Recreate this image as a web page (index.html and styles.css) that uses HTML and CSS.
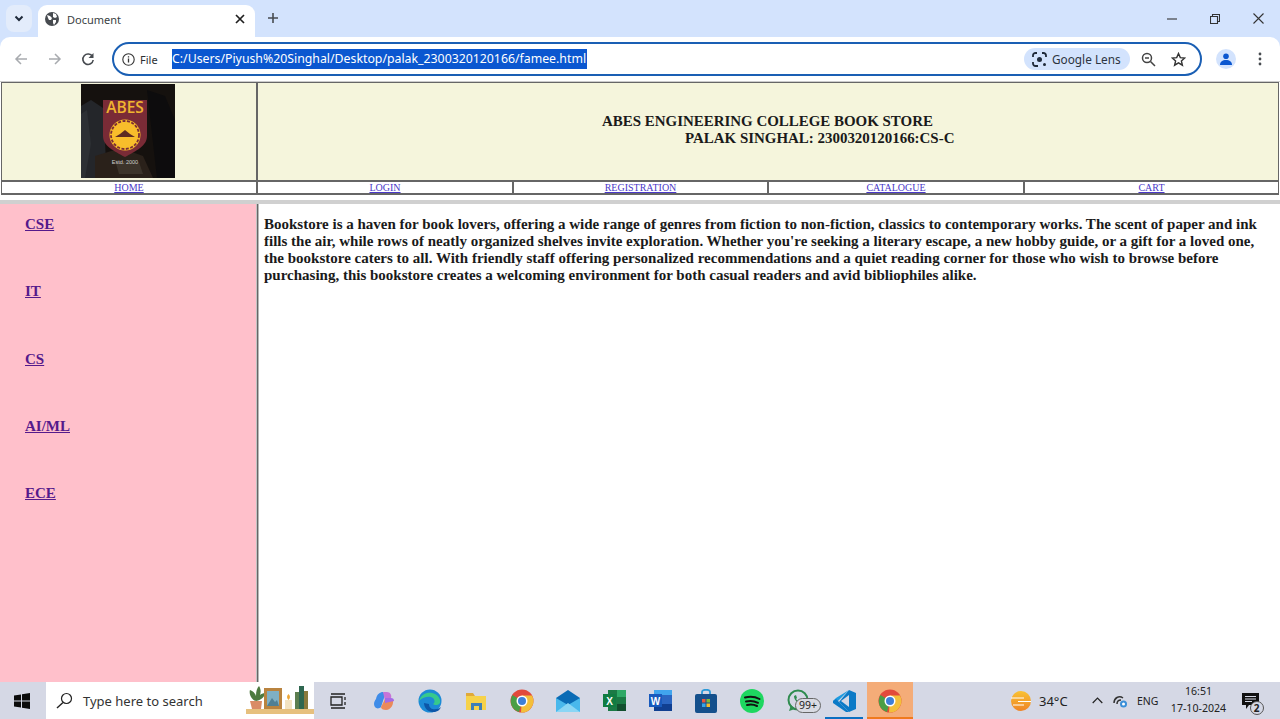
FILE: index.html
```html
<!DOCTYPE html>
<html lang="en">
<head>
<meta charset="utf-8">
<title>Document</title>
<link rel="stylesheet" href="styles.css">
</head>
<body>
<div class="screen">
  <div class="tabstrip">
    <div class="tablist"><svg width="10" height="7" viewBox="0 0 10 7"><path d="M1.5 1.5 5 5l3.5-3.5" fill="none" stroke="#1f2a3a" stroke-width="2"/></svg></div>
    <div class="tab">
      <svg class="globe" width="14" height="14" viewBox="0 0 14 14"><circle cx="7" cy="7" r="7" fill="#474b50"/><path d="M2 3l3 1 2 2-1 2-2 0-1-2zM8 1l3 1 1 3-2 1-2-1zM8 8l3 0 0 2-2 3-1-2z" fill="#fff"/></svg>
      <span class="tabtitle">Document</span>
      <svg class="tabclose" width="10" height="10" viewBox="0 0 10 10"><path d="M1 1l8 8M9 1l-8 8" stroke="#1f1f1f" stroke-width="1.7"/></svg>
    </div>
    <svg class="newtab" width="12" height="12" viewBox="0 0 12 12"><path d="M6 1v10M1 6h10" stroke="#474b50" stroke-width="1.6"/></svg>
    <div class="winctl">
      <svg width="10" height="10" viewBox="0 0 10 10"><path d="M0 5h10" stroke="#333" stroke-width="1.1"/></svg>
      <svg width="10" height="10" viewBox="0 0 10 10"><path d="M.5 2.5h7v7h-7zM2.5 2.5v-2h7v7h-2" fill="none" stroke="#333" stroke-width="1.1"/></svg>
      <svg width="11" height="11" viewBox="0 0 11 11"><path d="M.5.5l10 10M10.5.5l-10 10" stroke="#333" stroke-width="1.1"/></svg>
    </div>
  </div>

  <div class="toolbar">
    <div class="navbtns">
      <svg width="14" height="14" viewBox="0 0 14 14"><path d="M13 7H2M7 2 2 7l5 5" fill="none" stroke="#a8abaf" stroke-width="1.5"/></svg>
      <svg width="14" height="14" viewBox="0 0 14 14"><path d="M1 7h11M7 2l5 5-5 5" fill="none" stroke="#a8abaf" stroke-width="1.5"/></svg>
      <svg width="14" height="14" viewBox="0 0 14 14"><path d="M11.5 4.5A5.2 5.2 0 1 0 12.2 8" fill="none" stroke="#474b50" stroke-width="1.6"/><path d="M12.5 1v5h-5z" fill="#474b50"/></svg>
    </div>
    <div class="omnibox">
      <svg class="info" width="13" height="13" viewBox="0 0 13 13"><circle cx="6.5" cy="6.5" r="5.7" fill="none" stroke="#333" stroke-width="1.1"/><path d="M6.5 5.5v4M6.5 3.2v1.2" stroke="#333" stroke-width="1.3"/></svg>
      <span class="filelabel">File</span>
      <span class="urltext">C:/Users/Piyush%20Singhal/Desktop/palak_2300320120166/famee.html</span>
      <div class="lens">
        <svg width="15" height="15" viewBox="0 0 15 15"><path d="M1 5V3.500A2.500 2.500 0 0 1 3.500 1H5M10 1h1.500A2.500 2.500 0 0 1 14 3.500V5M1 10v1.500A2.500 2.500 0 0 0 3.500 14H6" fill="none" stroke="#1f2a3a" stroke-width="1.800"/><circle cx="7.500" cy="7.500" r="2.500" fill="#1f2a3a"/><circle cx="12.500" cy="12.500" r="1.500" fill="#1f2a3a"/></svg>
        <span>Google Lens</span>
      </div>
      <svg class="omni-icon" width="15" height="15" viewBox="0 0 15 15"><circle cx="6" cy="6" r="4.500" fill="none" stroke="#444" stroke-width="1.500"/><path d="M9.500 9.500 14 14M4 6h4" stroke="#444" stroke-width="1.500"/></svg>
      <svg class="omni-icon star" width="15" height="15" viewBox="0 0 15 15"><path d="M7.500 1.500 9.300 5.600l4.400.4-3.300 2.900 1 4.300-3.900-2.300-3.900 2.300 1-4.300L1.300 6l4.400-.4z" fill="none" stroke="#333" stroke-width="1.400"/></svg>
    </div>
    <div class="avatar"><svg width="12" height="12" viewBox="0 0 12 12"><circle cx="6" cy="3.200" r="2.800" fill="#0b57d0"/><path d="M0 12c0-3.500 2.500-5 6-5s6 1.500 6 5z" fill="#0b57d0"/></svg></div>
    <svg class="kebab" width="4" height="14" viewBox="0 0 4 14"><circle cx="2" cy="2" r="1.400" fill="#474b50"/><circle cx="2" cy="7" r="1.400" fill="#474b50"/><circle cx="2" cy="12" r="1.400" fill="#474b50"/></svg>
  </div>

  <div class="page">
    <header class="topframe">
      <div class="bannerrow">
        <div class="logocell">
          <svg width="94" height="94" viewBox="0 0 94 94">
            <rect width="94" height="94" fill="#15110e"/>
            <path d="M0 22 10 16 22 24 26 94H0z" fill="#24262a"/>
            <path d="M0 30 6 26 10 60 4 94H0z" fill="#2d3034"/>
            <path d="M14 72 40 64 62 72 72 94H14z" fill="#2a211a"/>
            <path d="M34 76 58 78 62 90 38 90z" fill="#3c342b"/>
            <path d="M66 6 84 12 94 36V94H76z" fill="#0d0c0d"/>
            <path d="M22 16H66V52C66 62 55 67 44 73 33 67 22 62 22 52z" fill="#7a2b36"/>
            <text x="44" y="29" class="logoword">ABES</text>
            <circle cx="44" cy="51" r="15.500" fill="#f8bd2b"/>
            <circle cx="44" cy="51" r="14" fill="none" stroke="#7a2b36" stroke-width="1.800" stroke-dasharray="3 1.500"/>
            <path d="M34 53 39 50 44 46 49 50 54 53z" fill="#5d2b22"/>
            <text x="44" y="80" class="logoest">Estd. 2000</text>
          </svg>
        </div>
        <div class="titlecell">
          <h1 class="title">ABES ENGINEERING COLLEGE BOOK STORE<span class="titlesub">PALAK SINGHAL: 2300320120166:CS-C</span></h1>
        </div>
      </div>
      <nav class="navrow">
        <div class="navcell"><a href="#">HOME</a></div>
        <div class="navcell"><a href="#">LOGIN</a></div>
        <div class="navcell"><a href="#">REGISTRATION</a></div>
        <div class="navcell"><a href="#">CATALOGUE</a></div>
        <div class="navcell"><a href="#">CART</a></div>
      </nav>
    </header>
    <div class="lowerframes">
      <aside class="sidebar">
        <a href="#">CSE</a>
        <a href="#">IT</a>
        <a href="#">CS</a>
        <a href="#">AI/ML</a>
        <a href="#">ECE</a>
      </aside>
      <main class="content">
        <p>Bookstore is a haven for book lovers, offering a wide range of genres from fiction to non-fiction, classics to contemporary works. The scent of paper and ink fills the air, while rows of neatly organized shelves invite exploration. Whether you're seeking a literary escape, a new hobby guide, or a gift for a loved one, the bookstore caters to all. With friendly staff offering personalized recommendations and a quiet reading corner for those who wish to browse before purchasing, this bookstore creates a welcoming environment for both casual readers and avid bibliophiles alike.</p>
      </main>
    </div>
  </div>

  <footer class="taskbar">
    <div class="start"><svg width="16" height="16" viewBox="0 0 16 16"><path d="M0 2.500 7 1.500V7.500H0zM8 1.300 16 0V7.500H8zM0 8.500H7V14.500L0 13.500zM8 8.500H16V16L8 14.700z" fill="#0c0c0c"/></svg></div>
    <div class="searchbox">
      <svg width="17" height="17" viewBox="0 0 17 17"><circle cx="10.500" cy="6.500" r="5" fill="none" stroke="#222" stroke-width="1.200"/><path d="M7 10.500 1 16" stroke="#222" stroke-width="1.400"/></svg>
      <span class="searchtext">Type here to search</span>
      <svg class="shelf" width="70" height="34" viewBox="0 0 70 34">
        <rect x="2" y="26" width="68" height="5" fill="#e6c07e"/>
        <path d="M6 18h12l-1 8H8z" fill="#d98c66"/>
        <path d="M12 18C6 16 5 9 6 7c3 1 5 3 6 6 0-5 1-8 3-10 2 3 2 6 1 9 1-1 3-2 5-2 0 3-3 7-9 8z" fill="#4d7a3f"/>
        <rect x="20" y="5" width="18" height="21" fill="#b9833f"/>
        <rect x="23" y="8" width="12" height="15" fill="#7fb0c4"/>
        <path d="M23 23l5-8 3 4 2-2 2 6z" fill="#4f7f94"/>
        <rect x="41" y="17" width="7" height="9" fill="#f2e2c0"/>
        <path d="M44.500 11c2 2 2 4 0 6-2-2-2-4 0-6z" fill="#eda83a"/>
        <rect x="51" y="9" width="5" height="17" fill="#5c7e4f"/>
        <rect x="55" y="3" width="5" height="23" fill="#2f6750"/>
        <rect x="60" y="8" width="4" height="18" fill="#8a7a3c"/>
      </svg>
    </div>
    <div class="apps">
      <div class="app"><svg width="18" height="16" viewBox="0 0 18 16"><path d="M2 1h14M2 15h14M2 4h11v8H2z M16 4v3M16 9v3" fill="none" stroke="#222" stroke-width="1.300"/></svg></div>
      <div class="app"><svg width="22" height="22" viewBox="0 0 22 22"><path d="M3 9C4 4 7 2 10 2l2 3-4 12c-3 3-7 1-7-3 0-2 1-4 2-5z" fill="#3f8ce8"/><path d="M10 2h4c3 0 5 3 4 6l-6 3z" fill="#c774d8"/><path d="M8 17 12 9l8 0c1 5-2 11-7 11-3 0-5-1-5-3z" fill="#eb8a5a"/><path d="M12 8h6c2 0 3 1 3 3l-9 2z" fill="#a46ae6"/></svg></div>
      <div class="app"><svg width="24" height="24" viewBox="0 0 24 24"><circle cx="12" cy="12" r="11.500" fill="#1c8ad6"/><path d="M1 12C3 5 9 3 14 4c5 1 9 5 8 10-1 2-5 3-7 1 2-1 2-4 0-6-3-2-9-2-14 3z" fill="#36c98c"/><path d="M6 14c0 5 4 9 9 9 4 0 7-2 8-5-3 3-12 4-12-3z" fill="#0c56a8"/></svg></div>
      <div class="app"><svg width="22" height="20" viewBox="0 0 22 20"><path d="M1 2h7l2 3h-9z" fill="#e0a93a"/><path d="M1 5h20v14H1z" fill="#f6d24a"/><path d="M6 12h11v7h-3v-4H9v4H6z" fill="#3d7fb8"/></svg></div>
      <div class="app"><svg width="24" height="24" viewBox="0 0 24 24"><circle cx="12" cy="12" r="11.500" fill="#e24a3b"/><path d="M12 12 2.500 6A11.500 11.500 0 0 0 9 23.100z" fill="#4a9e45"/><path d="M12 6.500h10a11.500 11.500 0 0 1-11 17z" fill="#f3bf3a"/><circle cx="12" cy="12" r="5.500" fill="#fff"/><circle cx="12" cy="12" r="4" fill="#3d7fd8"/></svg></div>
      <div class="app"><svg width="24" height="22" viewBox="0 0 24 22"><path d="M0 8 12 0l12 8v14H0z" fill="#0a6bb5"/><path d="M0 8l12 7 12-7v14H0z" fill="#49b8ec"/><path d="M0 22 12 13l12 9z" fill="#8ad6f5"/></svg></div>
      <div class="app"><svg width="23" height="21" viewBox="0 0 23 21"><path d="M5 0h18v21H5z" fill="#1b7a45"/><path d="M14 0h9v7h-9z" fill="#2fa866"/><path d="M14 14h9v7h-9z" fill="#124f2e"/><rect y="4" width="13" height="13" fill="#107c41"/><text x="6.500" y="14.500" class="applet">X</text></svg></div>
      <div class="app"><svg width="23" height="21" viewBox="0 0 23 21"><path d="M5 0h18v21H5z" fill="#2b66c2"/><path d="M5 0h18v5H5z" fill="#41a5ee"/><path d="M5 14h18v7H5z" fill="#103f91"/><rect y="4" width="13" height="13" fill="#185abd"/><text x="6.500" y="14.500" class="applet">W</text></svg></div>
      <div class="app"><svg width="22" height="24" viewBox="0 0 22 24"><path d="M7 5V3c0-3 8-3 8 0v2" fill="none" stroke="#2c9ad8" stroke-width="1.800"/><rect y="5" width="22" height="19" rx="2" fill="#14508c"/><rect x="7" y="10" width="3.500" height="3.500" fill="#e8573c"/><rect x="11.500" y="10" width="3.500" height="3.500" fill="#7fba3a"/><rect x="7" y="14.500" width="3.500" height="3.500" fill="#36a4e8"/><rect x="11.500" y="14.500" width="3.500" height="3.500" fill="#f4bb2a"/></svg></div>
      <div class="app"><svg width="24" height="24" viewBox="0 0 24 24"><circle cx="12" cy="12" r="12" fill="#1ed760"/><path d="M5 8.500c5-1.500 10-1 14.500 1.500M6 12.500c4-1 8-.7 12 1.300M7 16c3.500-.8 7-.5 10 1" fill="none" stroke="#111" stroke-width="2" stroke-linecap="round"/></svg></div>
      <div class="app app-wa">
        <svg width="22" height="24" viewBox="0 0 22 24"><circle cx="11" cy="11" r="9.500" fill="none" stroke="#2f8c4f" stroke-width="2"/><path d="M2 22l2-6 4 4z" fill="#2f8c4f"/><path d="M7 7c0 4 4 8 8 8l1-2-3-1-1 1c-1-1-2-2-3-3l1-1-1-3z" fill="#2f8c4f"/></svg>
        <span class="badge">99+</span>
      </div>
      <div class="app app-running"><svg width="24" height="24" viewBox="0 0 24 24"><path d="M17 1 24 4V20L17 23 7 13z" fill="#0b7ac7"/><path d="M17 6V18L9 12z" fill="#d5d8e5"/><path d="M17 1 4 14 1 12 4 9 17 1z" fill="#1f9be0"/><path d="M1 12 4 10 17 23 14 23 1 14z" fill="#0b7ac7"/></svg></div>
      <div class="app app-active"><svg width="24" height="24" viewBox="0 0 24 24"><circle cx="12" cy="12" r="11.500" fill="#e24a3b"/><path d="M12 12 2.500 6A11.500 11.500 0 0 0 9 23.100z" fill="#4a9e45"/><path d="M12 6.500h10a11.500 11.500 0 0 1-11 17z" fill="#f3bf3a"/><circle cx="12" cy="12" r="5.500" fill="#fff"/><circle cx="12" cy="12" r="4" fill="#3d7fd8"/></svg></div>
    </div>
    <div class="tray">
      <svg class="sun" width="20" height="20" viewBox="0 0 20 20"><defs><linearGradient id="sungrad" x1="0" y1="0" x2="0" y2="1"><stop offset="0" stop-color="#f9c233"/><stop offset="1" stop-color="#ee8426"/></linearGradient></defs><circle cx="10" cy="10" r="10" fill="url(#sungrad)"/><path d="M0 7h13M7 10.500h13M2 14h11" stroke="#fff" stroke-width="1.200"/></svg>
      <span class="temp">34°C</span>
      <svg class="chev" width="11" height="7" viewBox="0 0 11 7"><path d="M.7 6 5.500 1l4.800 5" fill="none" stroke="#222" stroke-width="1.200"/></svg>
      <svg class="net" width="14" height="14" viewBox="0 0 14 14"><path d="M1 9c0-5 5-8 9-5" fill="none" stroke="#333" stroke-width="1.500"/><path d="M4 10c0-3 2-4 4-4" fill="none" stroke="#333" stroke-width="1.500"/><circle cx="10.500" cy="10" r="3.500" fill="#3a8fd8"/><circle cx="10.500" cy="10" r="1.500" fill="#fff"/></svg>
      <span class="lang">ENG</span>
      <div class="clock"><span>16:51</span><span>17-10-2024</span></div>
      <div class="notify">
        <svg width="17" height="16" viewBox="0 0 17 16"><path d="M0 0h17v12H7l-3 4v-4H0z" fill="#111"/><path d="M3 3.500h11M3 6h11M3 8.500h7" stroke="#d5d8e5" stroke-width="1"/></svg>
        <span class="notifybadge">2</span>
      </div>
    </div>
  </footer>
</div>
</body>
</html>
```
FILE: styles.css
```css
* { box-sizing: border-box; }
html, body { margin: 0; padding: 0; }
body { font-family: "Liberation Serif", serif; background: #fff; overflow: hidden; }
svg { display: block; flex: none; }
.screen { width: 1280px; height: 719px; display: flex; flex-direction: column; overflow: hidden; background: #d3e3fd; }

.tabstrip { height: 37px; flex: none; background: #d3e3fd; display: flex; align-items: flex-end; padding-left: 6px; font-family: "Noto Sans", "Open Sans", sans-serif; }
.tablist { width: 26px; height: 27px; margin-bottom: 5px; background: #e3ecfb; border-radius: 8px; display: flex; align-items: center; justify-content: center; }
.tab { width: 217px; height: 32px; margin-left: 6px; background: #fff; border-radius: 9px 9px 0 0; display: flex; align-items: center; padding: 0 10px 4px 7px; }
.globe { margin-right: 8px; }
.tabtitle { font-size: 11px; color: #3b3f44; flex: 1; }
.newtab { margin: 0 0 13px 12px; }
.winctl { margin-left: auto; width: 113px; height: 37px; padding-right: 16px; display: flex; align-items: center; justify-content: space-between; }

.toolbar { height: 44px; flex: none; background: #fff; display: flex; align-items: center; border-radius: 10px 10px 0 0; font-family: "Noto Sans", "Open Sans", sans-serif; }
.navbtns { width: 112px; display: flex; justify-content: space-between; padding: 0 17px 0 14px; }
.omnibox { width: 1090px; height: 34px; border: 2px solid #1a5fb4; border-radius: 17px; display: flex; align-items: center; padding: 0 14px 0 8px; }
.info { margin-right: 5px; }
.filelabel { font-size: 11px; color: #2c2f33; width: 32px; }
.urltext { background: #0b57d0; color: #fff; font-size: 12.300px; line-height: 20px; height: 20px; white-space: nowrap; width: 415px; font-family: "Noto Sans", "Open Sans", sans-serif; }
.lens { margin-left: auto; width: 106px; height: 22px; background: #d3e3fd; border-radius: 11px; display: flex; align-items: center; gap: 5px; padding-left: 8px; font-size: 11.800px; color: #2c3440; white-space: nowrap; }
.omni-icon { margin-left: 11px; }
.star { margin-left: 15px; }
.avatar { width: 20px; height: 20px; margin-left: 14px; border-radius: 50%; background: #d3e3fd; display: flex; align-items: center; justify-content: center; }
.kebab { margin-left: 22px; }

.page { flex: 1; min-height: 0; display: flex; flex-direction: column; border-top: 1px solid #ccc; background: #fff; }
.topframe { height: 118px; flex: none; padding: 0 1px; }
.bannerrow { display: grid; grid-template-columns: 256px 1fr; height: 98px; border: 1px solid #666; border-width: 1px 1px 0; background: #f5f5dc; }
.logocell { display: flex; justify-content: center; padding: 1px 2px 0 0; border-right: 2px solid #666; }
.titlecell { display: flex; align-items: center; padding: 0 0 3px 344px; }
.title { margin: 0; font-size: 14.950px; line-height: 17px; font-weight: bold; color: #1a1a1a; }
.titlesub { display: block; padding-left: 83px; }
.logoword { font-family: "Open Sans", sans-serif; font-size: 15.500px; font-weight: 600; fill: #f0b530; text-anchor: middle; }
.logoest { font-family: "Liberation Sans", sans-serif; font-size: 5.500px; fill: #cfcfcf; text-anchor: middle; }
.applet { font-family: "Liberation Sans", sans-serif; font-size: 10px; font-weight: bold; fill: #fff; text-anchor: middle; }

.navrow { display: grid; grid-template-columns: 256px 256px 255px 256px 1fr; height: 15px; border: 2px solid #666; border-width: 2px 1px; background: #fff; }
.navcell { text-align: center; font-size: 10px; line-height: 11px; border-right: 2px solid #666; }
.navcell:last-child { border-right: 0; }
.navcell a { color: #4a38c8; }

.lowerframes { flex: 1; min-height: 0; display: flex; border-top: 4px solid #d0d0d0; }
.sidebar { width: 256px; flex: none; background: #ffc0cb; padding: 12px 0 0 25px; display: flex; flex-direction: column; gap: 50.300px; font-size: 15px; font-weight: bold; line-height: 17px; }
.sidebar a { color: #551a8b; align-self: flex-start; }
.content { flex: 1; min-width: 0; border-left: 1px solid #c4c4c4; box-shadow: inset 1px 0 0 #666, inset 2px 0 0 #b8b8b8; padding: 12px 6px 0 7px; }
.content p { margin: 0; font-size: 15px; line-height: 17px; font-weight: bold; color: #1a1a1a; }

.taskbar { height: 37px; flex: none; background: #d5d8e5; display: flex; align-items: stretch; font-family: "Noto Sans", "Open Sans", sans-serif; }
.start { width: 46px; display: flex; align-items: center; justify-content: center; padding-right: 2px; }
.searchbox { width: 268px; background: #fff; display: flex; align-items: center; padding-left: 10px; position: relative; }
.searchtext { font-size: 13px; color: #333; margin-left: 10px; }
.shelf { position: absolute; right: 0; top: 1px; }
.apps { display: flex; padding-left: 1px; }
.app { width: 46px; display: flex; align-items: center; justify-content: center; position: relative; }
.app-running::after { content: ""; position: absolute; left: 4px; right: 4px; bottom: 0; height: 2px; background: #0b6fc2; }
.app-active { background: #f4ac78; }
.app-active::after { content: ""; position: absolute; left: 0; right: 0; bottom: 0; height: 2px; background: #f07a1e; }
.badge { position: absolute; left: 20px; top: 16px; height: 15px; padding: 0 3px; background: #d9dbe3; border: 1px solid #666; border-radius: 8px; font-size: 10.500px; line-height: 13px; color: #222; }
.tray { margin-left: auto; display: flex; align-items: center; font-size: 12px; color: #222; }
.sun { margin-right: 8px; }
.temp { font-size: 13px; width: 52.500px; }
.net { margin-left: 10.500px; }
.lang { font-size: 10.500px; margin-left: 10px; width: 30px; }
.clock { display: flex; flex-direction: column; align-items: center; width: 60px; margin-left: 1.500px; padding-bottom: 2px; font-size: 10.600px; line-height: 17px; white-space: nowrap; }
.notify { position: relative; margin: 0 21.500px 0 13px; }
.notifybadge { position: absolute; left: 8px; top: 8px; width: 14px; height: 14px; border: 1px solid #555; border-radius: 50%; background: #d5d8e5; font-size: 10px; font-weight: bold; line-height: 12px; text-align: center; }
```
